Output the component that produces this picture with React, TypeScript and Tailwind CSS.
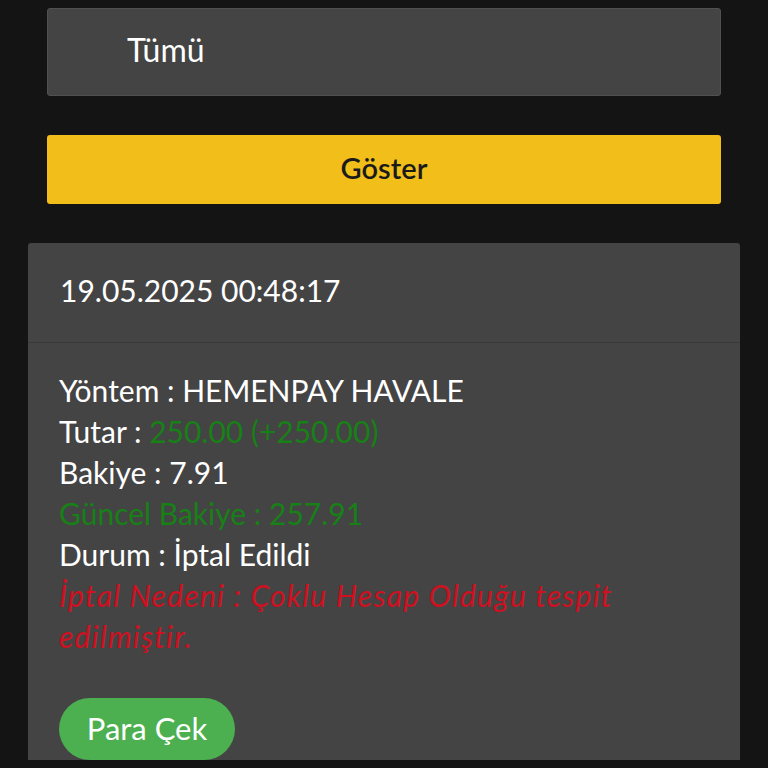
import React from "react";

export default function App() {
  const font = { fontFamily: "Lato, 'Noto Sans', sans-serif" };
  return (
    <div className="min-h-[768px] h-[768px] overflow-hidden bg-[#141414] text-white" style={font}>
      <div className="px-[47px] pt-[8px]">
        <div className="h-[88px] rounded-[3px] bg-[#444444] border border-[#505050] flex items-center pl-[79px] pb-[5px] text-[32px] text-white">
          Tümü
        </div>
        <button className="mt-[39px] w-full h-[69px] rounded-[3px] bg-[#f1be1a] text-[#1a1a1a] text-[29px] font-semibold flex items-center justify-center pb-[3px]">
          Göster
        </button>
      </div>
      <div className="mx-[28px] mt-[39px] rounded-t-[3px] bg-[#444444]">
        <div className="h-[100px] flex items-center px-[32px] pb-[5px] text-[30px] border-b border-[#393939]">
          19.05.2025 00:48:17
        </div>
        <div className="px-[31px] pt-[27px] text-[30px] leading-[41px]">
          <div>Yöntem : HEMENPAY HAVALE</div>
          <div>
            Tutar : <span className="text-[#178017]">250.00 (+250.00)</span>
          </div>
          <div>Bakiye : 7.91</div>
          <div className="text-[#178017]">Güncel Bakiye : 257.91</div>
          <div>Durum : İptal Edildi</div>
          <div className="italic text-[#d01020] tracking-[1.25px] pr-[40px]">
            İptal Nedeni : Çoklu Hesap Olduğu tespit edilmiştir.
          </div>
          <div className="pt-[41px]">
            <button className="h-[62px] w-[176px] rounded-full bg-[#4caf50] text-white text-[31px] flex items-center justify-center pb-[2px]">
              Para Çek
            </button>
          </div>
        </div>
      </div>
    </div>
  );
}
